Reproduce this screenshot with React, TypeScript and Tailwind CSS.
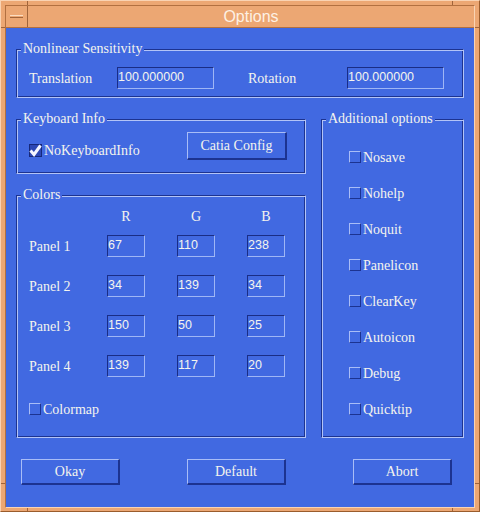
import type { ReactNode } from "react";

function Group({
  title,
  className,
  children,
}: {
  title: string;
  className: string;
  children?: ReactNode;
}) {
  return (
    <div
      className={`relative border border-t-[#1c3391] border-l-[#1c3391] border-b-[#b3c4f7] border-r-[#b3c4f7] shadow-[inset_1px_1px_0_#b3c4f7,inset_-1px_-1px_0_#1c3391] ${className}`}
    >
      <span className="absolute left-[4px] top-[-9px] h-4 bg-[#4169e1] px-[2px] leading-4 whitespace-nowrap">
        {title}
      </span>
      {children}
    </div>
  );
}

function Field({ value, className }: { value: string; className: string }) {
  return (
    <div
      className={`h-[22px] border border-t-[#1a2d85] border-l-[#1a2d85] border-b-[#9fb6f5] border-r-[#9fb6f5] pt-[2px] font-['Liberation_Sans',Arial,sans-serif] text-[12.5px] leading-[14px] ${className}`}
    >
      {value}
    </div>
  );
}

function Check({ label, checked = false }: { label: string; checked?: boolean }) {
  return (
    <div className="flex h-5 items-center gap-[1px] whitespace-nowrap">
      {checked ? (
        <svg width="13" height="13" viewBox="0 0 13 13" className="shrink-0">
          <rect x="0.5" y="0.5" width="12" height="12" fill="#2c47b4" stroke="#16287a" />
          <path d="M1.5 6.5 L5 10.5 L11.5 1.5" fill="none" stroke="#f4f6ff" strokeWidth="3" strokeLinejoin="miter" />
        </svg>
      ) : (
        <span className="h-[12px] w-[12px] shrink-0 border border-t-[#a9bdf7] border-l-[#a9bdf7] border-b-[#1c3391] border-r-[#1c3391]" />
      )}
      <span className="pl-[1px]">{label}</span>
    </div>
  );
}

function Btn({ label, className }: { label: string; className: string }) {
  return (
    <button
      type="button"
      className={`flex items-center justify-center border-t border-l border-b-2 border-r-2 border-t-[#a9bdf7] border-l-[#a9bdf7] border-b-[#1c3391] border-r-[#1c3391] leading-4 ${className}`}
    >
      {label}
    </button>
  );
}

const panels = [
  { name: "Panel 1", rgb: ["67", "110", "238"] },
  { name: "Panel 2", rgb: ["34", "139", "34"] },
  { name: "Panel 3", rgb: ["150", "50", "25"] },
  { name: "Panel 4", rgb: ["139", "117", "20"] },
];

const extras = ["Nosave", "Nohelp", "Noquit", "Panelicon", "ClearKey", "Autoicon", "Debug", "Quicktip"];

export default function App() {
  return (
    <div className="relative h-[512px] w-[480px] border border-t-[#f9d3b3] border-l-[#f9d3b3] border-b-[#9a5c2c] border-r-[#9a5c2c] bg-[#eca773] pt-[4px] pl-[4px] pr-[4px] pb-[3px]">
      {/* frame handle marks */}
      <span className="absolute left-[26px] top-0 h-[4px] w-[1px] bg-[#a0643a]" />
      <span className="absolute left-[451px] top-0 h-[4px] w-[1px] bg-[#a0643a]" />
      <span className="absolute left-[26px] bottom-0 h-[3px] w-[1px] bg-[#a0643a]" />
      <span className="absolute left-[451px] bottom-0 h-[3px] w-[1px] bg-[#a0643a]" />
      <span className="absolute left-0 top-[26px] h-[1px] w-[4px] bg-[#a0643a]" />
      <span className="absolute right-0 top-[26px] h-[1px] w-[4px] bg-[#a0643a]" />
      <span className="absolute left-0 top-[482px] h-[1px] w-[4px] bg-[#a0643a]" />
      <span className="absolute right-0 top-[482px] h-[1px] w-[4px] bg-[#a0643a]" />

      <div className="flex h-full flex-col border border-t-[#b27040] border-l-[#b27040] border-b-[#f9d3b3] border-r-[#f9d3b3]">
        {/* title bar */}
        <div className="flex h-[22px] shrink-0 border-b border-b-[#b27040]">
          <div className="flex w-[22px] items-center justify-center border-r border-r-[#a0643a]">
            <span className="h-[3px] w-[13px] border-t border-t-[#fbdcc0] border-b border-b-[#a0643a]" />
          </div>
          <div className="flex flex-1 items-center justify-center font-['Liberation_Sans',Arial,sans-serif] text-[16px] leading-5 text-[#fdf1e4]">
            Options
          </div>
        </div>

        {/* client area */}
        <div className="flex flex-1 flex-col bg-[#4169e1] px-[10px] pt-[21px] font-['Liberation_Serif','Times_New_Roman',serif] text-[14px] text-[#f4f4ee]">
          <Group title="Nonlinear Sensitivity" className="h-[49px] pl-[12px] pt-[17px]">
            <div className="flex h-[22px] items-center">
              <span className="w-[88px]">Translation</span>
              <Field value="100.000000" className="w-[97px]" />
              <span className="ml-[34px] w-[99px]">Rotation</span>
              <Field value="100.000000" className="w-[97px]" />
            </div>
          </Group>

          <div className="mt-[21px] flex gap-[15px]">
            <div className="flex w-[290px] flex-col gap-[21px]">
              <Group title="Keyboard Info" className="h-[55px] pl-[12px] pr-[18px] pt-[12px]">
                <div className="flex items-start justify-between">
                  <div className="mt-[8px]">
                    <Check label="NoKeyboardInfo" checked />
                  </div>
                  <Btn label="Catia Config" className="h-[28px] w-[100px]" />
                </div>
              </Group>

              <Group title="Colors" className="h-[243px] pl-[12px] pt-[13px]">
                <div className="flex h-4 items-center leading-4">
                  <span className="w-[78px]" />
                  <div className="flex gap-[32px]">
                    <span className="w-[38px] text-center">R</span>
                    <span className="w-[38px] text-center">G</span>
                    <span className="w-[38px] text-center">B</span>
                  </div>
                </div>
                <div className="mt-[10px] flex flex-col gap-[18px]">
                  {panels.map((p) => (
                    <div key={p.name} className="flex h-[22px] items-center">
                      <span className="w-[78px]">{p.name}</span>
                      <div className="flex gap-[32px]">
                        {p.rgb.map((v, i) => (
                          <Field key={i} value={v} className="w-[38px]" />
                        ))}
                      </div>
                    </div>
                  ))}
                </div>
                <div className="mt-[22px]">
                  <Check label="Colormap" />
                </div>
              </Group>
            </div>

            <Group title="Additional options" className="w-[143px] pl-[27px] pt-[27px]">
              <div className="flex flex-col gap-[16px]">
                {extras.map((e) => (
                  <Check key={e} label={e} />
                ))}
              </div>
            </Group>
          </div>

          <div className="mt-[21px] flex gap-[67px] pl-[5px]">
            <Btn label="Okay" className="h-[26px] w-[99px]" />
            <Btn label="Default" className="h-[26px] w-[99px]" />
            <Btn label="Abort" className="h-[26px] w-[99px]" />
          </div>
        </div>
      </div>
    </div>
  );
}
